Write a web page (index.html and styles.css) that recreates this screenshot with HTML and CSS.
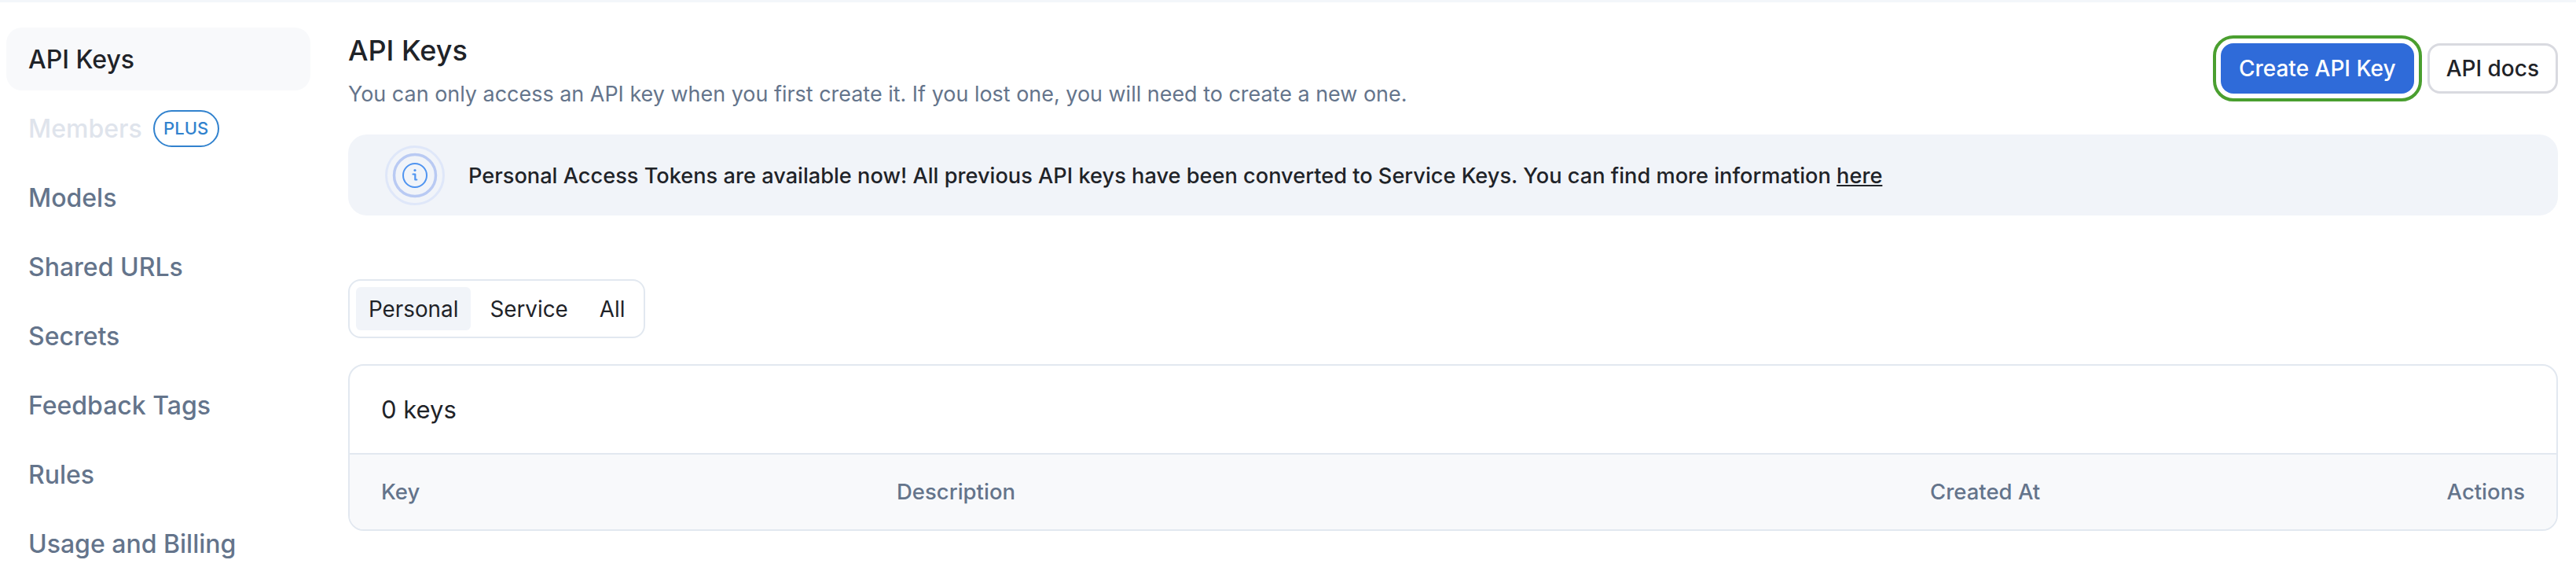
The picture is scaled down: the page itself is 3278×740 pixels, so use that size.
FILE: index.html
```html
<!DOCTYPE html>
<html lang="en">
<head>
    <meta charset="UTF-8">
    <title>API Keys</title>
    <link rel="stylesheet" href="styles.css">
</head>
<body>
<div class="wrap">
    <ul class="side">
        <li class="on">API Keys</li>
        <li class="off">Members <span class="plus">PLUS</span></li>
        <li>Models</li>
        <li>Shared URLs</li>
        <li>Secrets</li>
        <li>Feedback Tags</li>
        <li>Rules</li>
        <li>Usage and Billing</li>
    </ul>
    <div class="main">
        <div class="head">
            <div>
                <h1>API Keys</h1>
                <p>You can only access an API key when you first create it. If you lost one, you will need to create a new one.</p>
            </div>
            <div class="btns">
                <a href="#" class="btn blue">Create API Key</a>
                <a href="#" class="btn">API docs</a>
            </div>
        </div>
        <div class="notice">
            <svg class="info" width="76" height="76" viewBox="0 0 76 76" fill="none">
                <circle cx="38" cy="38" r="36.5" stroke="#dfe7f9" stroke-width="3"/>
                <circle cx="38" cy="38" r="26.5" stroke="#b9caf3" stroke-width="3.5"/>
                <circle cx="38" cy="38" r="15" stroke="#4f94f0" stroke-width="2"/>
                <path d="M35.5 36.5h2.8v7h2" stroke="#4f94f0" stroke-width="2.2" stroke-linecap="round" stroke-linejoin="round"/>
                <circle cx="38" cy="31.5" r="1.6" fill="#4f94f0"/>
            </svg>
            <span class="msg">Personal Access Tokens are available now! All previous API keys have been converted to Service Keys. You can find more information <a href="#">here</a></span>
        </div>
        <div class="tabs">
            <span class="on">Personal</span>
            <span>Service</span>
            <span>All</span>
        </div>
        <div class="table">
            <div class="count">0 keys</div>
            <div class="cols">
                <span class="c1">Key</span>
                <span class="c2">Description</span>
                <span class="c3">Created At</span>
                <span class="c4">Actions</span>
            </div>
        </div>
    </div>
</div>
</body>
</html>
```
FILE: styles.css
```css
*{ margin: 0; padding: 0; box-sizing: border-box; }
ul{ list-style: none; }
a{ text-decoration: none; color: inherit; }
html,body{ height: 740px; overflow: hidden; background: #fff; }
body{
    font-family: Inter, "Liberation Sans", sans-serif;
    color: #1f2328;
    border-top: 3px solid #f3f6fa;
}
.wrap{
    display: flex;
}
.side{
    width: 443px;
    flex: none;
    padding: 32px 48px 0 8px;
}
.side li{
    display: flex;
    align-items: center;
    gap: 14px;
    height: 80px;
    margin-bottom: 8px;
    padding-left: 28px;
    border-radius: 20px;
    font-size: 32px;
    font-weight: 500;
    color: #64748b;
    white-space: nowrap;
}
.side li.on{
    background: #f8f9fb;
    color: #1f2328;
}
.side li.off{
    color: #dfe4ec;
}
.plus{
    display: block;
    width: 84px;
    height: 47px;
    border: 2px solid #3182ce;
    border-radius: 24px;
    font-size: 22px;
    line-height: 43px;
    text-align: center;
    color: #3182ce;
}
.main{
    width: 2812px;
    flex: none;
}
.head{
    display: flex;
    justify-content: space-between;
    height: 168px;
}
.head h1{
    margin-top: 39px;
    font-size: 36px;
    line-height: 44px;
    font-weight: 500;
}
.head p{
    margin-top: 14px;
    font-size: 26.95px;
    line-height: 40px;
    color: #64748b;
}
.btns{
    display: flex;
    gap: 17px;
    margin-top: 52px;
    height: 64px;
}
.btn{
    height: 64px;
    padding: 0 21px;
    border: 3px solid #d9dae0;
    border-radius: 16px;
    font-size: 28px;
    font-weight: 500;
    line-height: 58px;
}
.btn.blue{
    border: none;
    line-height: 64px;
    padding: 0 23px;
    background: #2f6bd9;
    color: #fff;
    outline: 4px solid #4a9f2f;
    outline-offset: 6px;
}
.notice{
    display: flex;
    align-items: center;
    height: 103px;
    padding-left: 47px;
    border-radius: 24px;
    background: #f1f4f9;
    font-size: 27.2px;
    font-weight: 500;
}
.notice .info{
    flex: none;
    margin-right: 30px;
}
.notice .msg{
    padding-top: 2px;
}
.notice a{
    text-decoration: underline;
}
.tabs{
    display: inline-flex;
    gap: 8px;
    height: 75px;
    margin-top: 81px;
    padding: 8px;
    border: 2px solid #e2e8f0;
    border-radius: 16px;
    font-size: 27.8px;
    line-height: 57px;
}
.tabs span{
    padding: 0 16px;
    border-radius: 6px;
}
.tabs .on{
    background: #f1f4f9;
}
.table{
    height: 212px;
    margin-top: 33px;
    border: 2px solid #e2e8f0;
    border-radius: 20px;
    overflow: hidden;
}
.count{
    height: 113px;
    padding-left: 40px;
    border-bottom: 2px solid #e2e8f0;
    font-size: 31px;
    line-height: 111px;
}
.cols{
    display: flex;
    height: 95px;
    padding: 0 40px;
    background: #f8f9fb;
    font-size: 27.5px;
    font-weight: 500;
    line-height: 95px;
    color: #64748b;
}
.c1{ width: 656px; }
.c2{ width: 1315px; }
.c3{ flex: 1; }
```
